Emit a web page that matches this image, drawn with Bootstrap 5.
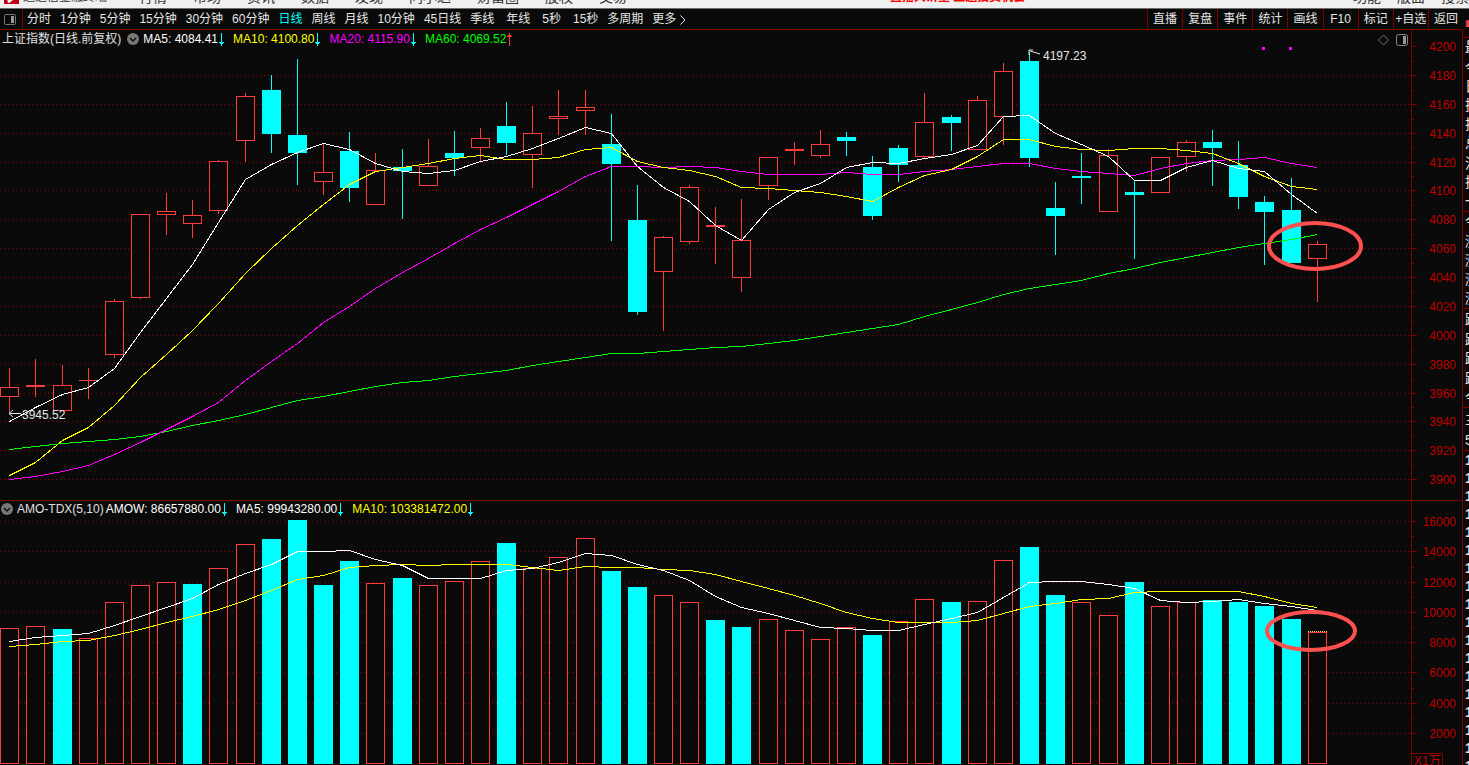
<!DOCTYPE html>
<html lang="zh-CN">
<head>
<meta charset="utf-8">
<meta name="viewport" content="width=device-width, initial-scale=1">
<title>上证指数 日线</title>
<link href="https://cdn.jsdelivr.net/npm/bootstrap@5.3.0/dist/css/bootstrap.min.css" rel="stylesheet">
<style>
:root { --ink:#0a0a0a; --rule:#800000; --tick:#c00000; --up:#ff3b3b; --down:#00ffff; }
body { background:var(--ink); color:#e6e6e6; font:12px/18px "Liberation Sans","Noto Sans CJK SC",sans-serif; height:100vh; min-height:600px; }
.menu-strip { height:9px; background:#f0f0f0; border-bottom:1px solid #6e6e6e; font-size:14px; line-height:14px; color:#333; padding-bottom:4px; }
.menu-strip a { color:#333; text-decoration:none; white-space:nowrap; }
.menu-strip .menus { gap:26px; }
.menu-strip .brand-name { font-size:12px; }
.menu-strip .promo { color:#f00; font-size:12px; font-weight:700; left:890px; bottom:4px; }
.workspace, .workspace main, .board { min-height:0; min-width:0; }
.tool-row { height:20px; }
.tool-row button { background:none; border:0; padding:0; color:#e6e6e6; white-space:nowrap; line-height:20px; }
.tool-row button.on { color:var(--down); }
.periods { gap:9px; padding-left:4px; }
.periods .spaced { margin-left:3px; }
.periods .pane-toggle { width:19px; border-right:1px solid var(--rule); margin-right:-5px; text-align:left; }
.actions { width:316px; display:grid; grid-template-columns:repeat(9,1fr); }
.actions button { border-left:1px solid var(--rule); }
.board { border-top:1px solid var(--rule); border-right:1px solid var(--rule); }
.price-pane { flex:470 0 0; min-height:0; }
.volume-pane { flex:264 0 0; min-height:0; border-top:1px solid var(--rule); }
.plot { display:block; width:100%; height:100%; }
.legend { top:0; left:0; padding-left:2px; color:#fff; white-space:nowrap; }
.volume-pane .legend { top:-1px; padding-left:1px; }
.legend svg { flex:none; }
.legend .item { display:flex; align-items:center; margin-right:8px; }
.legend .arrow { margin-left:-1px; }
.legend .fold { background:none; border:0; padding:0; margin-right:4px; display:flex; }
.legend .index-name { margin-right:6px; }
.legend .study-name { margin-right:2px; }
.c-y { color:#ff0; } .c-m { color:#f0f; } .c-g { color:#0f0; } .c-t { color:#e0e0e0; }
.corner { top:4px; right:54px; gap:7px; }
.corner button { background:none; border:0; padding:0; display:flex; }
.quotes { width:6px; }
.quotes .block { border-bottom:1px solid var(--rule); display:flex; flex-direction:column; justify-content:space-around; padding-left:2px; overflow:hidden; font-size:14px; line-height:18px; }
.quotes .ticks { font-size:14px; font-weight:700; line-height:18px; padding-left:2px; }
svg text { font:12px "Liberation Sans","Noto Sans CJK SC",sans-serif; }
</style>
</head>
<body class="d-flex flex-column overflow-hidden">
<header class="menu-strip position-relative d-flex align-items-end justify-content-between overflow-hidden flex-shrink-0">
  <nav class="d-flex align-items-end" aria-label="主菜单">
    <svg class="ms-1 me-1" width="15" height="14" viewBox="0 0 15 14" aria-hidden="true"><path d="M0 0H15V14H0Z" fill="#c00018"/><path d="M4 12 9 8" stroke="#fff" stroke-width="3"/></svg>
    <span class="brand-name me-4">通达信金融终端</span>
    <div class="menus d-flex ms-2"><a href="#">行情</a><a href="#">市场</a><a href="#">资讯</a><a href="#">数据</a><a href="#">发现</a><a href="#">问小达</a><a href="#">财富圈</a><a href="#">股权</a><a href="#">交易</a></div>
  </nav>
  <span class="promo position-absolute">直播大讲堂 主题投资机会</span>
  <nav class="d-flex gap-3" aria-label="系统菜单"><a href="#">功能</a><a href="#">版面</a><a href="#">搜索</a></nav>
</header>

<div class="workspace d-flex flex-fill">
  <main class="flex-fill d-flex flex-column">
    <div class="tool-row d-flex justify-content-between flex-shrink-0">
      <div class="periods d-flex">
        <button class="pane-toggle" aria-label="侧栏"><svg width="12" height="11" viewBox="0 0 12 11"><rect x=".5" y=".5" width="11" height="10" rx="1" fill="none" stroke="#777"/><rect x="7" y="2" width="3" height="7" fill="#999"/></svg></button>
        <button>分时</button><button>1分钟</button><button>5分钟</button><button>15分钟</button><button>30分钟</button><button>60分钟</button><button class="on">日线</button><button>周线</button><button>月线</button><button>10分钟</button><button>45日线</button><button>季线</button><button class="spaced">年线</button><button class="spaced">5秒</button><button class="spaced">15秒</button><button>多周期</button>
        <button>更多<svg class="ms-1" width="6" height="10" viewBox="0 0 6 10"><path d="M.5 .5 5 5 .5 9.500" fill="none" stroke="#e6e6e6"/></svg></button>
      </div>
      <div class="actions"><button>直播</button><button>复盘</button><button>事件</button><button>统计</button><button>画线</button><button>F10</button><button>标记</button><button>+自选</button><button>返回</button></div>
    </div>

    <div class="board flex-fill d-flex flex-column">
      <section class="price-pane position-relative">
        <svg class="plot" id="price" role="img" aria-label="上证指数日K线"></svg>
        <div class="legend position-absolute d-flex align-items-center">
          <span class="c-t index-name">上证指数(日线.前复权)</span>
          <button class="fold" aria-label="展开"><svg width="12" height="12" viewBox="0 0 12 12"><circle cx="6" cy="6" r="6" fill="#777"/><path d="M3 5 6 8 9 5" fill="none" stroke="#111" stroke-width="1.500"/></svg></button>
          <span class="item">MA5: 4084.41<svg class="arrow" width="8" height="13"><use href="#dn"/></svg></span>
          <span class="item c-y">MA10: 4100.80<svg class="arrow" width="8" height="13"><use href="#dn"/></svg></span>
          <span class="item c-m">MA20: 4115.90<svg class="arrow" width="8" height="13"><use href="#dn"/></svg></span>
          <span class="item c-g">MA60: 4069.52<svg class="arrow" width="8" height="13"><use href="#up"/></svg></span>
        </div>
        <div class="corner position-absolute d-flex">
          <button aria-label="标记"><svg width="11" height="12" viewBox="0 0 11 12"><path d="M5.500 1 10.500 6 5.500 11 .5 6Z" fill="none" stroke="#777"/></svg></button>
          <button aria-label="侧栏"><svg width="12" height="12" viewBox="0 0 12 12"><rect x=".5" y=".5" width="11" height="11" rx="2" fill="none" stroke="#888"/><rect x="7" y="2" width="3" height="8" fill="#999"/></svg></button>
        </div>
      </section>
      <section class="volume-pane position-relative">
        <svg class="plot" id="volume" role="img" aria-label="成交额"></svg>
        <div class="legend position-absolute d-flex align-items-center">
          <button class="fold" aria-label="展开"><svg width="12" height="12" viewBox="0 0 12 12"><circle cx="6" cy="6" r="6" fill="#777"/><path d="M3 5 6 8 9 5" fill="none" stroke="#111" stroke-width="1.500"/></svg></button>
          <span class="c-t study-name">AMO-TDX(5,10)</span>
          <span class="item">AMOW: 86657880.00<svg class="arrow" width="8" height="13"><use href="#dn"/></svg></span>
          <span class="item">MA5: 99943280.00<svg class="arrow" width="8" height="13"><use href="#dn"/></svg></span>
          <span class="item c-y">MA10: 103381472.00<svg class="arrow" width="8" height="13"><use href="#dn"/></svg></span>
        </div>
      </section>
    </div>
  </main>
  <aside class="quotes d-flex flex-column overflow-hidden flex-shrink-0" aria-label="报价">
    <div class="block" style="flex:28 0 0;color:var(--up)"><span>■</span></div>
    <div class="block" style="flex:174 0 0"><span>最</span><span>今</span><span>日</span><span>换</span><span>振</span><span>总</span><span>流</span><span>换</span><span>一</span></div>
    <div class="block" style="flex:97 0 0"><span>今</span><span>涨</span><span>涨</span><span>涨</span><span>涨</span></div>
    <div class="block" style="flex:99 0 0"><span>跌</span><span>跌</span><span>跌</span><span>跌</span><span>今</span></div>
    <div class="block" style="flex:42 0 0"><span>主</span><span>5</span></div>
    <div class="ticks overflow-hidden" style="flex:316 0 0" id="ticks"></div>
  </aside>
</div>

<svg width="0" height="0" class="position-absolute" aria-hidden="true">
  <symbol id="dn" viewBox="0 0 8 13"><path d="M4 0H5V9H7V10H6V11H5V13H4V11H3V10H2V9H4Z" fill="#0ff" shape-rendering="crispEdges"/></symbol>
  <symbol id="up" viewBox="0 0 8 13"><path d="M4 0H5V2H6V3H7V4H5V13H4V4H2V3H3V2H4Z" fill="#ff3b3b" shape-rendering="crispEdges"/></symbol>
</svg>

<script src="https://cdn.jsdelivr.net/npm/bootstrap@5.3.0/dist/js/bootstrap.bundle.min.js"></script>
<script>
// Candles: direction (1 up, 0 down), high, body top, body bottom, low; all on the 0-470 price-pane scale plus 30.
const K = [[1,368,387,397,412],[1,359,385,387,397],[1,365,385,411,411],[1,368,380,381,399],[1,299,301,355,358],[1,214,214,298,299],[1,193,211,215,235],[1,200,215,224,238],[1,160,161,211,214],[1,93,96,141,162],
[0,75,90,134,153],[0,59,135,153,185],[1,143,172,182,195],[0,132,151,188,202],[1,153,170,205,205],[0,149,167,171,219],[1,139,166,186,186],[0,131,153,158,176],[1,128,138,148,162],[0,102,126,143,155],
[1,106,133,155,188],[1,90,116,119,135],[1,90,107,111,135],[0,114,144,164,241],[0,185,220,312,315],[1,236,237,272,331],[1,185,187,242,244],[1,207,225,227,264],[1,199,240,278,292],[1,157,157,186,200],
[1,142,149,151,165],[1,130,144,156,158],[0,132,137,141,156],[0,156,167,216,220],[0,145,148,165,182],[1,93,122,157,158],[0,115,117,123,151],[1,96,100,150,150],[1,63,71,117,145],[0,52,61,158,167],
[0,182,208,216,255],[0,153,176,178,204],[1,149,155,212,212],[0,180,192,195,259],[1,157,157,193,193],[1,140,142,157,172],[0,130,142,148,186],[0,141,165,197,209],[0,196,202,212,265],[0,178,210,263,263],[1,241,244,259,302]];
const MA = {
 '#fff':[421,407,394,387,368,332,298,264,222,179,164,152,143,149,163,171,173,170,161,156,148,138,127,133,166,187,201,225,240,209,192,183,167,162,163,158,154,145,116,115,133,144,156,180,180,167,160,168,171,194,213],
 '#ff0':[475,462,440,427,405,377,354,330,303,273,248,225,204,184,171,167,163,158,155,159,159,157,149,147,161,167,170,176,187,188,190,192,196,201,187,175,169,156,139,139,146,149,150,148,148,150,153,163,176,186,189],
 '#f0f':[479,476,471,465,454,442,429,416,402,380,361,343,322,306,288,272,258,243,229,217,204,191,176,166,166,167,166,167,171,174,174,174,172,174,174,171,169,166,163,163,168,171,173,175,168,163,160,159,157,163,167],
 '#0f0':[449,446,443,441,439,436,431,425,420,414,407,400,396,391,386,382,380,376,373,370,365,361,357,353,353,351,349,347,346,343,340,336,332,328,324,316,309,302,294,288,284,280,273,268,262,257,252,247,243,239,234]};
// Turnover bars and their averages, on the volume-pane scale plus 501.
const V = [628,626,629,638,602,585,582,584,568,544,539,520,585,561,583,578,585,581,561,543,568,557,538,571,587,595,602,620,627,619,630,639,627,635,621,599,602,601,560,547,595,602,615,582,606,602,600,602,606,619,632];
const VM = {
 '#fff':[641,637,635,633,625,616,607,598,584,573,564,551,551,550,559,565,578,578,578,570,568,562,553,555,564,570,580,596,607,613,620,627,628,630,630,624,618,612,597,582,581,581,584,588,600,602,601,599,603,606,610],
 '#ff0':[646,644,641,640,635,629,622,616,609,600,590,579,575,567,565,564,565,564,564,564,567,570,566,567,567,569,570,574,581,588,595,603,612,618,622,622,622,620,613,606,603,599,598,592,591,591,591,591,596,603,607]};
const VDOWN = new Set([2,7,10,11,12,13,15,19,23,24,27,28,33,36,39,40,43,46,47,48,49]);
const AXIS = 51, BASE_W = 1411;

function scene(svg, baseH, off) {
  const W = svg.clientWidth, H = svg.clientHeight;
  svg.setAttribute('viewBox', `0 0 ${W} ${H}`);
  const P = W - AXIS, kx = P / BASE_W, ky = H / baseH;
  const x = v => Math.round(v * kx), y = v => Math.round((v - off) * ky);
  return { svg, W, H, P, x, y, cx: i => Math.floor((9.8 + 26.148 * i) * kx), half: Math.max(2, Math.round(9 * kx)), out: [] };
}
const box = (s, x, y, w, h, f) => s.out.push(`<rect x="${x}" y="${y}" width="${w}" height="${h}" fill="${f}" shape-rendering="crispEdges"/>`);
const hollow = (s, x, y, w, h) => s.out.push(`<rect x="${x + .5}" y="${y + .5}" width="${w - 1}" height="${h - 1}" fill="#0a0a0a" stroke="#ff3b3b" shape-rendering="crispEdges"/>`);
function grid(s, levels) {
  levels.forEach(([v, label], i) => {
    const gy = s.y(v);
    if (label !== 4200) s.out.push(`<path d="M0 ${gy + .5}H${s.P}" stroke="#a00000" stroke-dasharray="1 3" shape-rendering="crispEdges"/>`);
    box(s, s.P, gy, 6, 1, '#800000');
    if (levels[i + 1]) box(s, s.P, s.y((v + levels[i + 1][0]) / 2), 3, 1, '#800000');
    s.out.push(`<text x="${s.W - 6}" y="${gy + 5}" text-anchor="end" fill="#c00000">${label}</text>`);
  });
  box(s, s.P, 0, 1, s.H, '#800000');
}
function curves(s, set) {
  for (const c of Object.keys(set).reverse())
    s.out.push(`<polyline points="${set[c].map((v, i) => (s.cx(i) + .5) + ',' + (s.y(v) + .5)).join(' ')}" fill="none" stroke="${c}" shape-rendering="crispEdges"/>`);
}
function drawPrice() {
  const s = scene(document.getElementById('price'), 470, 30);
  grid(s, [46,75,104,133,162,190,219,248,277,306,335,364,393,421,450,479].map((v, i) => [v, 4200 - 20 * i]));
  K.forEach(([up, hi, top, bot, lo], i) => {
    const c = s.cx(i), w = s.half * 2 + 1, t = s.y(top), b = s.y(bot), col = up ? '#ff3b3b' : '#00ffff';
    box(s, c, s.y(hi), 1, Math.max(0, t - s.y(hi)), col);
    box(s, c, b, 1, Math.max(0, s.y(lo) - b), col);
    if (up && b - t > 2) hollow(s, c - s.half, t, w, b - t); else box(s, c - s.half, t, w, Math.max(1, b - t), col);
  });
  curves(s, MA);
  [1262, 1289].forEach(v => box(s, s.x(v), s.y(47), 3, 3, '#ff00ff'));
  const hx = s.cx(39), hy = s.y(51), lx = s.cx(0), ly = s.y(413);
  s.out.push(`<path d="M${hx + 11} ${hy + 3}L${hx + 1} ${hy}M${hx + 4} ${hy - 1}H${hx}V${hy + 4}" fill="none" stroke="#e6e6e6"/><text x="${hx + 14}" y="${hy + 9}" fill="#e6e6e6">4197.23</text>`);
  s.out.push(`<path d="M${lx + 12} ${ly + .5}H${lx}M${lx + 4} ${ly - 3}L${lx} ${ly + .5}L${lx + 4} ${ly + 4}" fill="none" stroke="#e6e6e6"/><text x="${lx + 13}" y="${ly + 6}" fill="#e6e6e6">3945.52</text>`);
  s.out.push(`<ellipse cx="${s.x(1315)}" cy="${s.y(246)}" rx="46" ry="23" fill="none" stroke="#ff5050" stroke-width="4"/>`);
  s.svg.innerHTML = s.out.join('');
}
function drawVolume() {
  const s = scene(document.getElementById('volume'), 264, 501);
  grid(s, [521,551,582,612,642,672,703,733].map((v, i) => [v, 16000 - 2000 * i]));
  V.forEach((v, i) => {
    const l = s.cx(i) - s.half, w = s.half * 2 + 1, t = s.y(v), h = s.y(764) - t;
    VDOWN.has(i) ? box(s, l, t, w, h, '#00ffff') : hollow(s, l, t, w, h);
  });
  const last = s.cx(50);
  s.out.push(`<path d="M${last - s.half} ${s.y(631) + .5}h${s.half * 2 + 1}" stroke="#ffe060" stroke-dasharray="1 1" shape-rendering="crispEdges"/>`);
  curves(s, VM);
  s.out.push(`<ellipse cx="${s.x(1311)}" cy="${s.y(631)}" rx="44" ry="19" fill="none" stroke="#ff5050" stroke-width="4"/>`);
  s.out.push(`<rect x="${s.P + .5}" y="${s.H - 11.5}" width="31" height="20" fill="#0a0a0a" stroke="#800000"/><text x="${s.P + 3}" y="${s.H}" fill="#c00000">X1万</text>`);
  s.svg.innerHTML = s.out.join('');
}
function draw() { drawPrice(); drawVolume(); }
document.getElementById('ticks').innerHTML = Array(18).fill('<div>1</div>').join('');
draw();
addEventListener('resize', draw);
</script>
</body>
</html>
